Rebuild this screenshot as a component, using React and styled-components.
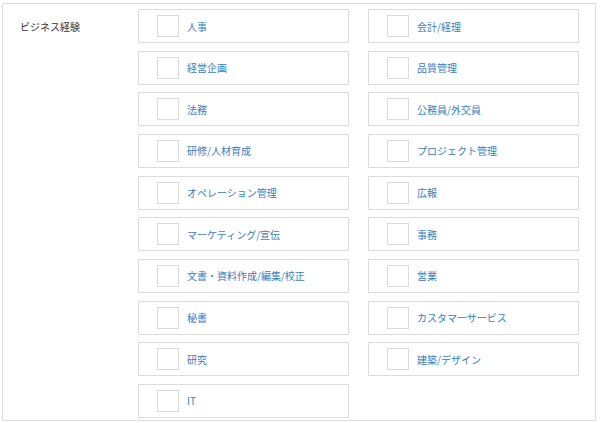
import React from "react";
import styled, { createGlobalStyle } from "styled-components";

const Global = createGlobalStyle`
  html, body { margin: 0; padding: 0; background: #fff; }
  body { font-family: "Noto Sans CJK JP", "Noto Sans", sans-serif; }
`;

const Frame = styled.div`
  box-sizing: border-box;
  margin: 3px 0 0 2px;
  width: 594px;
  height: 418px;
  border: 1px solid #dedede;
  padding: 5px 15px 2px 0;
  display: flex;
  align-items: flex-start;
`;

const FieldLabel = styled.div`
  box-sizing: border-box;
  width: 135px;
  flex: none;
  padding: 10px 0 0 17px;
  font-size: 10px;
  line-height: 16px;
  color: #333;
`;

const Options = styled.div`
  display: grid;
  grid-template-columns: 211px 211px;
  grid-auto-rows: 34px;
  column-gap: 19px;
  row-gap: 7.67px;
`;

const Option = styled.label`
  box-sizing: border-box;
  display: flex;
  align-items: center;
  border: 1px solid #dcdcdc;
  padding-left: 18px;
  cursor: pointer;
`;

const Box = styled.span`
  box-sizing: border-box;
  width: 22px;
  height: 22px;
  flex: none;
  border: 1px solid #dadada;
  background: #fff;
  margin-right: 8px;
`;

const OptionText = styled.span`
  font-size: 10px;
  line-height: 14px;
  color: #3a7cbf;
  margin-top: 1px;
`;

const left = [
  "人事",
  "経営企画",
  "法務",
  "研修/人材育成",
  "オペレーション管理",
  "マーケティング/宣伝",
  "文書・資料作成/編集/校正",
  "秘書",
  "研究",
  "IT",
];
const right = [
  "会計/経理",
  "品質管理",
  "公務員/外交員",
  "プロジェクト管理",
  "広報",
  "事務",
  "営業",
  "カスタマーサービス",
  "建築/デザイン",
];

const items = [];
left.forEach((l, i) => {
  items.push(l);
  if (right[i]) items.push(right[i]);
});

export default function App() {
  return (
    <>
      <Global />
      <Frame>
        <FieldLabel>ビジネス経験</FieldLabel>
        <Options>
          {items.map((t) => (
            <Option key={t}>
              <Box />
              <OptionText>{t}</OptionText>
            </Option>
          ))}
        </Options>
      </Frame>
    </>
  );
}
